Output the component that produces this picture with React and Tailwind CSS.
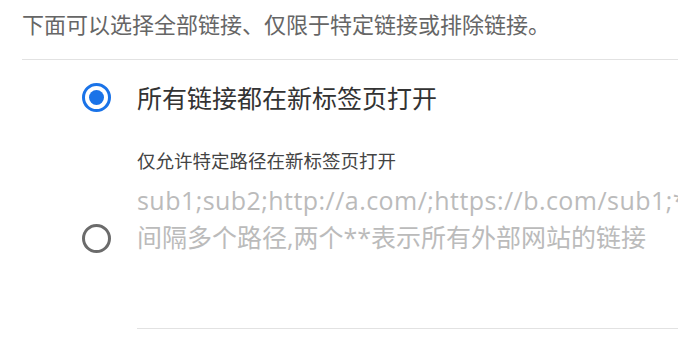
import { useState } from 'react'

const cjk = { fontFamily: '"Noto Sans CJK SC", "Noto Sans", sans-serif' }
const mixed = { fontFamily: '"Open Sans", "Noto Sans CJK SC", sans-serif' }

function Radio({ checked }) {
  return checked ? (
    <span className="flex h-[29px] w-[29px] shrink-0 items-center justify-center rounded-full border-[3px] border-[#1a73e8]">
      <span className="h-[15px] w-[15px] rounded-full bg-[#1a73e8]" />
    </span>
  ) : (
    <span className="h-[29px] w-[29px] shrink-0 rounded-full border-[3px] border-[#6b6b6b]" />
  )
}

export default function App() {
  const [mode, setMode] = useState('all')

  return (
    <div className="h-[348px] w-[700px] bg-white" style={cjk}>
      <div className="w-[678px] overflow-hidden">
        <p className="pl-[22px] pt-[8px] text-[22px] leading-[30px] text-[#666]">
          下面可以选择全部链接、仅限于特定链接或排除链接。
        </p>
        <div className="ml-[22px] mt-[21px] border-t border-[#e2e2e2]" />

        <div className="flex items-center pl-[82px] pt-[20px]" onClick={() => setMode('all')}>
          <Radio checked={mode === 'all'} />
          <span className="ml-[26px] text-[25px] leading-[34px] text-[#333]">所有链接都在新标签页打开</span>
        </div>

        <div className="mt-[33px] flex items-center pl-[82px]" onClick={() => setMode('some')}>
          <Radio checked={mode === 'some'} />
          <div className="ml-[26px] flex-1">
            <div className="text-[18.5px] leading-[26px] text-[#444]">仅允许特定路径在新标签页打开</div>
            <div className="mt-[9px] whitespace-nowrap text-[25px] leading-[37px] tracking-[0.45px] text-[#bbb]" style={mixed}>
              sub1;sub2;http://a.com/;https://b.com/sub1;**;用分号
            </div>
            <div className="whitespace-nowrap text-[25px] leading-[37px] text-[#bbb]" style={mixed}>
              间隔多个路径,两个**表示所有外部网站的链接
            </div>
            <div className="mt-[72px] border-t border-[#e2e2e2]" />
          </div>
        </div>
      </div>
    </div>
  )
}
